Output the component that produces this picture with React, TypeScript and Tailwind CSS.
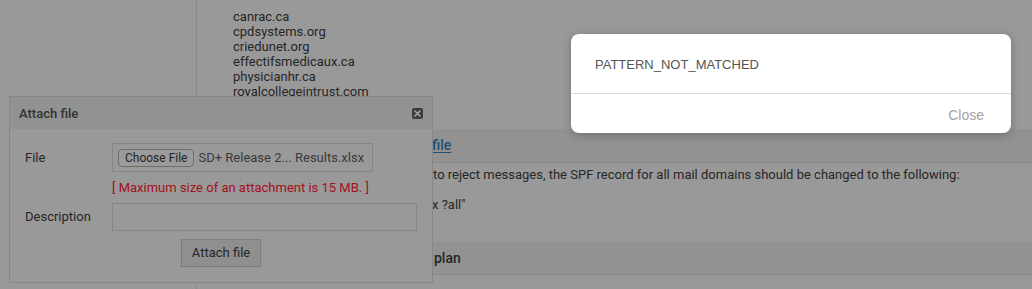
import React from "react";

const domains = [
  "canrac.ca",
  "cpdsystems.org",
  "criedunet.org",
  "effectifsmedicaux.ca",
  "physicianhr.ca",
  "royalcollegeintrust.com",
];

export default function App() {
  return (
    <div className="relative w-[1032px] h-[289px] overflow-hidden bg-[#999999] font-['Roboto',sans-serif] text-[#262626]">
      <div className="flex h-full">
        <div className="w-[197px] shrink-0 border-r border-[#8a8a8a]" />
        <div className="flex-1 flex flex-col">
          <ul className="pl-[36px] pt-[9px] text-[13px] leading-[15px] h-[129px] overflow-hidden">
            {domains.map((d) => (
              <li key={d}>{d}</li>
            ))}
          </ul>
          <div className="h-[34px] bg-[#929292] border-b border-[#878787] flex items-center text-[14px] font-medium whitespace-nowrap overflow-hidden">
            <span className="w-[235px] shrink-0" />
            <span className="text-[#1d4f72] underline underline-offset-2">file</span>
          </div>
          <div className="text-[13px] leading-[20px] whitespace-nowrap overflow-hidden pt-[2px]">
            <div className="flex">
              <span className="w-[236px] shrink-0" />
              <span>to reject messages, the SPF record for all mail domains should be changed to the following:</span>
            </div>
            <div className="flex mt-[10px]">
              <span className="w-[235px] shrink-0" />
              <span>x ?all"</span>
            </div>
          </div>
          <div className="mt-[27px] h-[33px] bg-[#929292] border-b border-[#878787] flex items-center text-[14px] font-medium whitespace-nowrap overflow-hidden">
            <span className="w-[237px] shrink-0" />
            <span>plan</span>
          </div>
        </div>
      </div>

      {/* Attach file dialog */}
      <div className="absolute left-[9px] top-[96px] w-[424px] h-[187px] border border-[#878787] bg-[#999999] flex flex-col">
        <div className="h-[32px] bg-[#929292] flex items-center justify-between pl-[9px] pr-[9px]">
          <span className="text-[13px] font-medium text-[#333333] translate-y-[1px]">Attach file</span>
          <span className="w-[11px] h-[11px] rounded-[2px] bg-[#3c3c3c] flex items-center justify-center">
            <svg width="7" height="7" viewBox="0 0 7 7">
              <path d="M1 1 L6 6 M6 1 L1 6" stroke="#a6a6a6" strokeWidth="1.6" strokeLinecap="round" />
            </svg>
          </span>
        </div>
        <div className="pl-[15px] pt-[14px] flex flex-col">
          <div className="flex items-center">
            <span className="w-[87px] text-[13px]">File</span>
            <div className="w-[261px] h-[29px] border border-[#868686] flex items-center pl-[5px] gap-[4px] whitespace-nowrap overflow-hidden">
              <span className="h-[18px] px-[6px] rounded-[4px] border border-[#6f6f6f] bg-[#9b9b9b] text-[12px] leading-[16px]">Choose File</span>
              <span className="text-[13px] text-[#3a3a3a]">SD+ Release 2... Results.xlsx</span>
            </div>
          </div>
          <div className="pl-[87px] mt-[8px] text-[13px] leading-[16px] text-[#a60f1c]">
            [ Maximum size of an attachment is 15 MB. ]
          </div>
          <div className="flex items-center mt-[7px]">
            <span className="w-[87px] text-[13px]">Description</span>
            <div className="w-[305px] h-[28px] border border-[#868686]" />
          </div>
          <div className="flex justify-center mt-[8px] pr-[15px]">
            <span className="w-[80px] h-[28px] border border-[#7d7d7d] bg-[#8f8f8f] flex items-center justify-center text-[13px]">
              Attach file
            </span>
          </div>
        </div>
      </div>

      {/* Alert modal */}
      <div className="absolute left-[571px] top-[34px] w-[440px] h-[99px] rounded-[8px] bg-white shadow-[0_2px_8px_rgba(0,0,0,0.25)] flex flex-col font-['Liberation_Sans',sans-serif]">
        <div className="h-[60px] border-b border-[#dcdcdc] flex items-center pl-[24px] pt-[3px] text-[13px] text-[#555555]">
          PATTERN_NOT_MATCHED
        </div>
        <div className="flex-1 flex items-center justify-end pr-[27px] pt-[3px] text-[14px] text-[#a3a3a3]">
          Close
        </div>
      </div>
    </div>
  );
}
